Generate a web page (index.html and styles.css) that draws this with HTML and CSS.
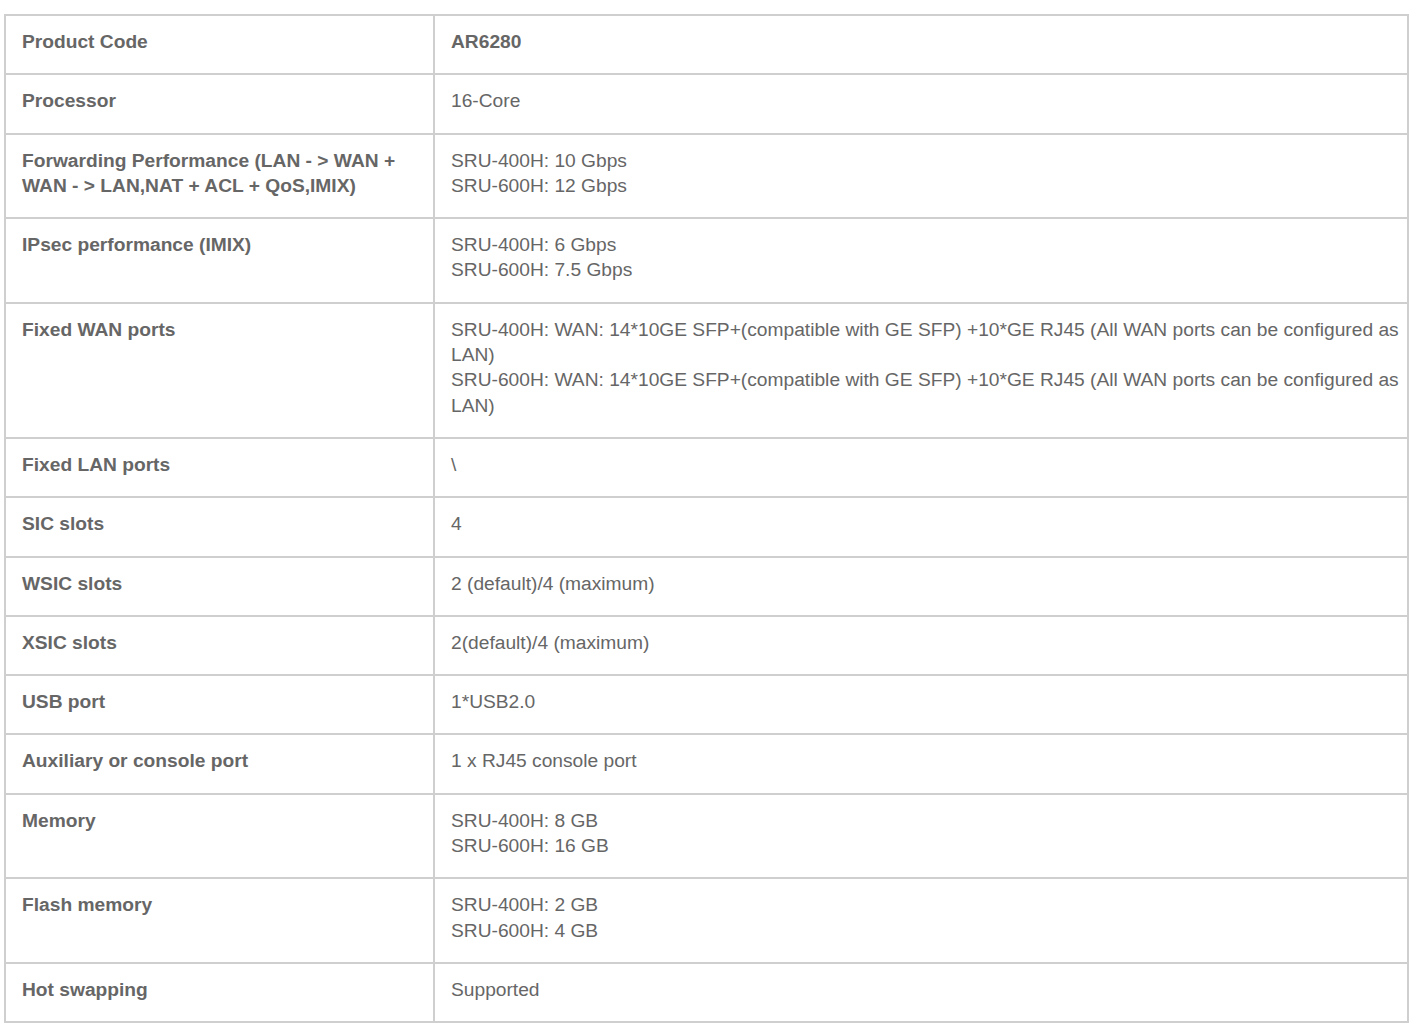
FILE: index.html
```html
<!DOCTYPE html>
<html lang="en">
<head>
<meta charset="utf-8">
<title>AR6280 Specifications</title>
<link rel="stylesheet" href="styles.css">
</head>
<body>
<div class="wrap">
<table class="spec">
<colgroup><col class="c1"><col class="c2"></colgroup>
<tbody>
<tr><th>Product Code</th><td class="strong">AR6280</td></tr>
<tr><th>Processor</th><td>16-Core</td></tr>
<tr><th>Forwarding Performance (LAN - &gt; WAN + WAN - &gt; LAN,NAT + ACL + QoS,IMIX)</th><td>SRU-400H: 10 Gbps<br>SRU-600H: 12 Gbps</td></tr>
<tr><th>IPsec performance (IMIX)</th><td>SRU-400H: 6 Gbps<br>SRU-600H: 7.5 Gbps</td></tr>
<tr><th>Fixed WAN ports</th><td>SRU-400H: WAN: 14*10GE SFP+(compatible with GE SFP) +10*GE RJ45 (All WAN ports can be configured as LAN)<br>SRU-600H: WAN: 14*10GE SFP+(compatible with GE SFP) +10*GE RJ45 (All WAN ports can be configured as LAN)</td></tr>
<tr><th>Fixed LAN ports</th><td>\</td></tr>
<tr><th>SIC slots</th><td>4</td></tr>
<tr><th>WSIC slots</th><td>2 (default)/4 (maximum)</td></tr>
<tr><th>XSIC slots</th><td>2(default)/4 (maximum)</td></tr>
<tr><th>USB port</th><td>1*USB2.0</td></tr>
<tr><th>Auxiliary or console port</th><td>1 x RJ45 console port</td></tr>
<tr><th>Memory</th><td>SRU-400H: 8 GB<br>SRU-600H: 16 GB</td></tr>
<tr><th>Flash memory</th><td>SRU-400H: 2 GB<br>SRU-600H: 4 GB</td></tr>
<tr><th>Hot swapping</th><td>Supported</td></tr>
</tbody>
</table>
</div>
</body>
</html>
```
FILE: styles.css
```css
html, body {
  margin: 0;
  padding: 0;
  background: #ffffff;
}
.wrap {
  padding: 14px 17px 0 4px;
}
.spec {
  width: 1405px;
  border-collapse: collapse;
  table-layout: fixed;
  font-family: "Liberation Sans", Arial, sans-serif;
  font-size: 19.2px;
  line-height: 25.3px;
  color: #666666;
}
.c1 { width: 429px; }
.spec th,
.spec td {
  border: 2px solid #cfcfcf;
  padding: 13px 2px 19px 16px;
  text-align: left;
  vertical-align: top;
}
.spec th {
  font-weight: bold;
  padding-right: 10px;
}
.spec td {
  font-weight: normal;
}
.spec td.strong {
  font-weight: bold;
}
```
